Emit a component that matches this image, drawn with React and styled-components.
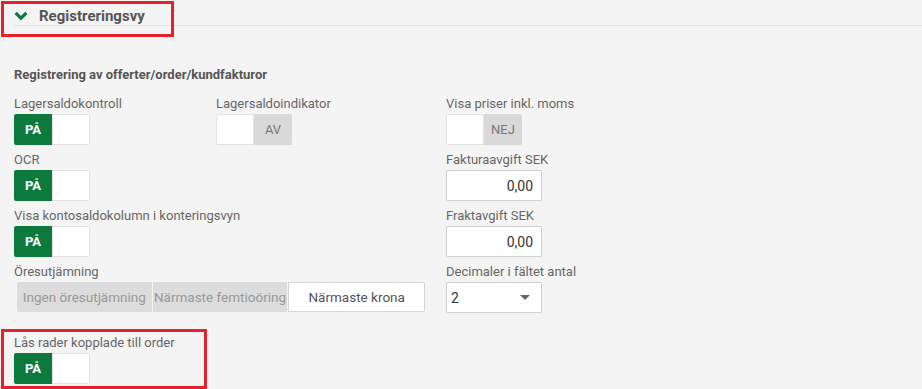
import styled, { createGlobalStyle } from 'styled-components'

const GlobalStyle = createGlobalStyle`
    html, body {
        margin: 0;
        padding: 0;
        background: #f4f4f4;
    }
    body {
        font-family: Roboto, "Liberation Sans", Arial, sans-serif;
        color: #666;
    }
`

const Page = styled.div`
    padding-left: 14px;
    width: 908px;
    height: 389px;
    overflow: hidden;
`

const Header = styled.div`
    position: relative;
    display: flex;
    align-items: center;
    height: 18px;
    padding-top: 7px;
    border-bottom: 1px solid #e2e2e2;
`

const HeaderTitle = styled.span`
    margin-left: 11px;
    font-size: 15px;
    font-weight: 700;
    color: #555;
`

const Annotation = styled.span`
    position: absolute;
    left: ${(p) => p.$left}px;
    top: ${(p) => p.$top}px;
    width: ${(p) => p.$width}px;
    height: ${(p) => p.$height}px;
    border: 3px solid #e8202a;
    box-sizing: border-box;
    pointer-events: none;
`

const SectionTitle = styled.h2`
    margin: 41px 0 13px;
    font-size: 13px;
    line-height: 16px;
    font-weight: 700;
    color: #555;
`

const Columns = styled.div`
    display: flex;
`

const LeftArea = styled.div`
    width: 432px;
    display: flex;
    flex-direction: column;
`

const RightColumn = styled.div`
    display: flex;
    flex-direction: column;
`

const Row = styled.div`
    display: flex;
`

const Field = styled.div`
    width: ${(p) => (p.$width ? `${p.$width}px` : 'auto')};
    margin-bottom: ${(p) => (p.$last ? 0 : 7)}px;
`

const Label = styled.div`
    font-size: 13px;
    line-height: 16px;
    margin-bottom: 2px;
    color: #666;
    white-space: nowrap;
`

const Toggle = styled.div`
    display: flex;
    width: 76px;
    height: 31px;
    border-radius: 2px;
    overflow: hidden;
`

const ToggleHalf = styled.div`
    width: 38px;
    display: flex;
    align-items: center;
    justify-content: center;
    font-size: 13px;
    box-sizing: border-box;
    ${(p) =>
        p.$kind === 'on'
            ? `background: #0b7a3c; color: #fff; font-weight: 700;`
            : p.$kind === 'off'
            ? `background: #d9d9d9; color: #777;`
            : `background: #fff; border: 1px solid #e3e3e3;`}
`

const Segmented = styled.div`
    display: flex;
    margin-left: 3px;
    width: 408px;
    height: 30px;
    border-radius: 2px;
    overflow: hidden;
`

const Segment = styled.div`
    flex: 1;
    display: flex;
    align-items: center;
    justify-content: center;
    font-size: 13.5px;
    box-sizing: border-box;
    ${(p) =>
        p.$active
            ? `background: #fff; color: #555; border: 1px solid #d6d6d6;`
            : `background: #dcdcdc; color: #999; border-right: 1px solid #f4f4f4;`}
`

const Highlight = styled.div`
    margin: 17px 0 0 -13px;
    width: 206px;
    padding: 3px 10px 2px;
    border: 3px solid #e8202a;
    box-sizing: border-box;
`

const Amount = styled.div`
    width: 96px;
    height: 31px;
    box-sizing: border-box;
    background: #fff;
    border: 1px solid #d2d2d2;
    border-radius: 2px;
    display: flex;
    align-items: center;
    justify-content: flex-end;
    padding-right: 8px;
    font-size: 14px;
    color: #333;
`

const Select = styled(Amount)`
    justify-content: space-between;
    padding: 0 11px 0 4px;
`

const Caret = styled.span`
    width: 0;
    height: 0;
    border-left: 5px solid transparent;
    border-right: 5px solid transparent;
    border-top: 5px solid #666;
`

function Switch({ on, onText = 'PÅ', offText = 'AV' }) {
    return (
        <Toggle>
            {on ? (
                <>
                    <ToggleHalf $kind="on">{onText}</ToggleHalf>
                    <ToggleHalf />
                </>
            ) : (
                <>
                    <ToggleHalf />
                    <ToggleHalf $kind="off">{offText}</ToggleHalf>
                </>
            )}
        </Toggle>
    )
}

function Chevron() {
    return (
        <svg width="14" height="10" viewBox="0 0 14 10">
            <path d="M1.6 1.8 L7 7.2 L12.4 1.8" fill="none" stroke="#0b7a3c" strokeWidth="3.2" />
        </svg>
    )
}

export default function App() {
    return (
        <>
            <GlobalStyle />
            <Page>
                <Header>
                    <Chevron />
                    <HeaderTitle>Registreringsvy</HeaderTitle>
                    <Annotation $left={-13} $top={1} $width={173} $height={36} />
                </Header>
                <SectionTitle>Registrering av offerter/order/kundfakturor</SectionTitle>
                <Columns>
                    <LeftArea>
                        <Row>
                            <Field $width={202}>
                                <Label>Lagersaldokontroll</Label>
                                <Switch on />
                            </Field>
                            <Field $width={202}>
                                <Label>Lagersaldoindikator</Label>
                                <Switch on={false} />
                            </Field>
                        </Row>
                        <Field>
                            <Label>OCR</Label>
                            <Switch on />
                        </Field>
                        <Field>
                            <Label>Visa kontosaldokolumn i konteringsvyn</Label>
                            <Switch on />
                        </Field>
                        <Field $last>
                            <Label>Öresutjämning</Label>
                            <Segmented>
                                <Segment>Ingen öresutjämning</Segment>
                                <Segment>Närmaste femtioöring</Segment>
                                <Segment $active>Närmaste krona</Segment>
                            </Segmented>
                        </Field>
                        <Highlight>
                            <Field $last>
                                <Label>Lås rader kopplade till order</Label>
                                <Switch on />
                            </Field>
                        </Highlight>
                    </LeftArea>
                    <RightColumn>
                        <Field>
                            <Label>Visa priser inkl. moms</Label>
                            <Switch on={false} offText="NEJ" />
                        </Field>
                        <Field>
                            <Label>Fakturaavgift SEK</Label>
                            <Amount>0,00</Amount>
                        </Field>
                        <Field>
                            <Label>Fraktavgift SEK</Label>
                            <Amount>0,00</Amount>
                        </Field>
                        <Field $last>
                            <Label>Decimaler i fältet antal</Label>
                            <Select>
                                <span>2</span>
                                <Caret />
                            </Select>
                        </Field>
                    </RightColumn>
                </Columns>
            </Page>
        </>
    )
}
